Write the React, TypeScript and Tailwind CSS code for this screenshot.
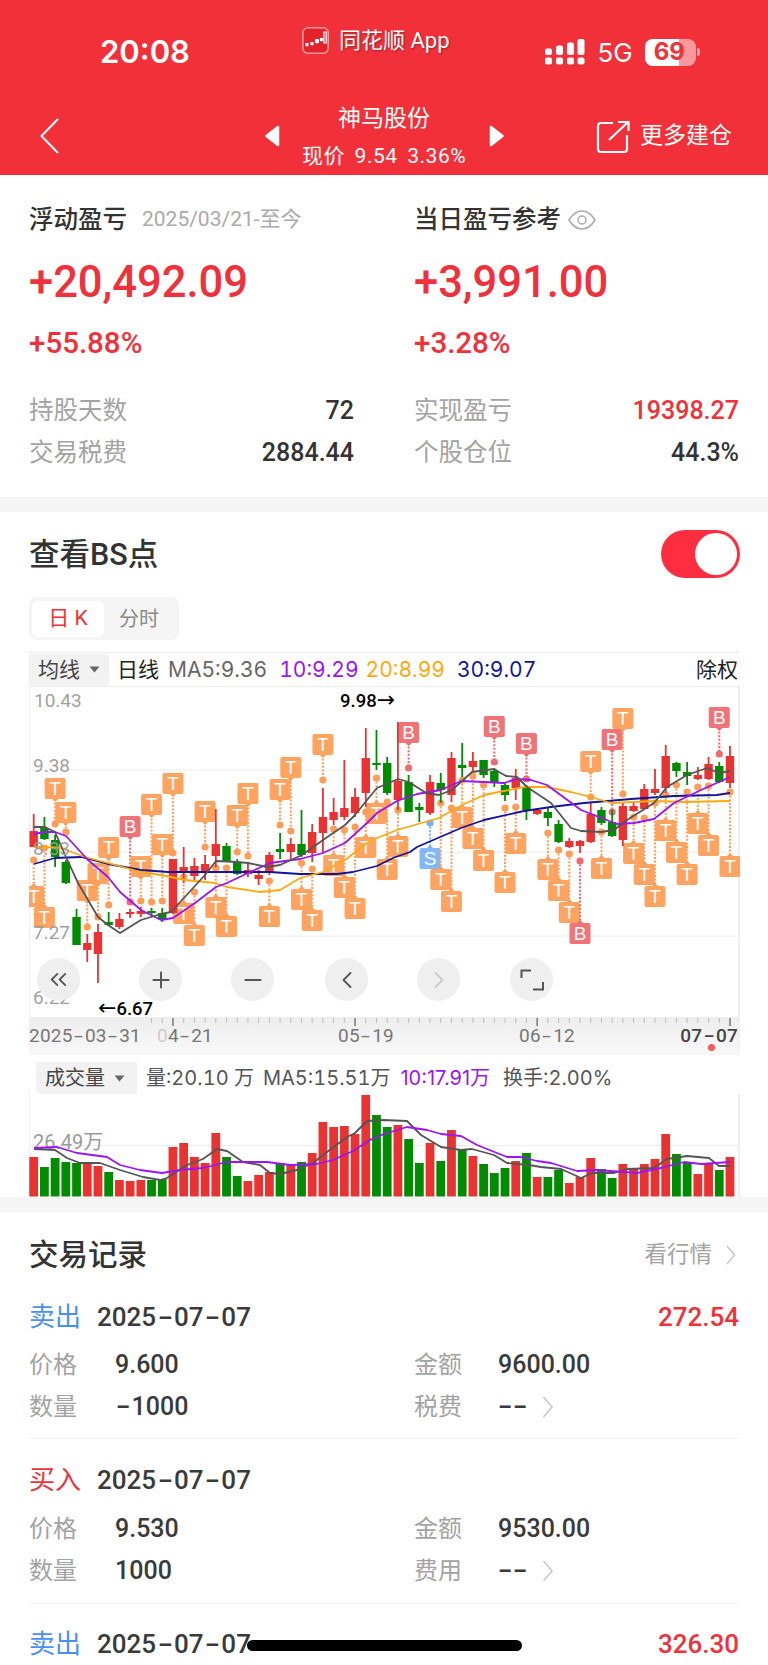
import React, { Fragment } from "react";
import { ChevronsLeft, ChevronLeft, ChevronRight, Plus, Minus } from "lucide-react";

const RED = "#e93232";
const GREEN = "#008c00";
const X = (i: number) => 33.7 + i * 10.712;

type C = [0 | 1, number, number, number, number];
const candles: C[] = [
  [0, 831, 847, 814, 847], [1, 828, 839, 817, 840], [1, 840, 857, 835, 867], [1, 862, 883, 860, 884],
  [1, 917, 945, 909, 945], [0, 943, 950, 934, 962], [0, 932, 954, 924, 983], [1, 922, 925, 912, 926],
  [0, 919, 927, 913, 929], [0, 912, 914, 909, 918], [0, 911, 914, 907, 917], [1, 911, 913, 908, 917],
  [1, 913, 919, 908, 922], [0, 859, 913, 859, 914], [0, 867, 871, 847, 883], [0, 866, 876, 858, 882],
  [0, 864, 872, 855, 880], [0, 844, 856, 809, 867], [1, 846, 862, 843, 862], [1, 862, 874, 859, 875],
  [0, 870, 874, 864, 877], [0, 875, 879, 870, 885], [0, 855, 873, 852, 875], [1, 849, 852, 833, 859],
  [0, 844, 852, 838, 859], [1, 844, 855, 810, 857], [0, 832, 853, 824, 862], [0, 817, 833, 788, 853],
  [0, 812, 820, 798, 825], [0, 808, 817, 760, 820], [0, 797, 813, 788, 817], [0, 758, 793, 728, 807],
  [1, 763, 765, 730, 770], [1, 763, 793, 757, 795], [0, 781, 800, 722, 810], [1, 782, 812, 775, 812],
  [1, 807, 810, 803, 822], [0, 782, 813, 775, 815], [1, 783, 790, 773, 803], [0, 758, 795, 752, 802],
  [1, 765, 768, 743, 777], [0, 761, 767, 752, 772], [1, 760, 775, 760, 778], [1, 771, 783, 768, 787],
  [1, 785, 795, 782, 801], [0, 778, 788, 769, 800], [1, 788, 810, 785, 820], [0, 810, 814, 808, 815],
  [1, 812, 818, 808, 826], [1, 824, 842, 820, 843], [0, 841, 847, 838, 848], [0, 841, 846, 840, 853],
  [0, 814, 842, 803, 843], [1, 810, 823, 807, 825], [1, 822, 836, 810, 837], [0, 806, 840, 803, 846],
  [0, 806, 811, 802, 812], [0, 789, 809, 784, 810], [0, 789, 793, 769, 795], [0, 756, 788, 745, 793],
  [1, 763, 771, 762, 777], [1, 772, 776, 762, 785], [0, 775, 779, 767, 780], [0, 764, 779, 757, 780],
  [1, 766, 782, 762, 783], [0, 756, 783, 746, 788],
];

type M = [number, "T" | "B" | "S", number, number];
const markers: M[] = [
  [0, "T", 886, 860], [1, "T", 907, 848], [2, "T", 778, 824], [3, "T", 802, 832], [5, "T", 880, 927],
  [6, "T", 863, 917], [7, "T", 837, 905], [9, "B", 816, 902], [10, "T", 856, 901], [11, "T", 794, 902],
  [12, "T", 834, 901], [13, "T", 773, 853], [14, "T", 903, 877], [15, "T", 925, 892], [16, "T", 801, 847],
  [17, "T", 897, 868], [18, "T", 916, 868], [19, "T", 805, 852], [20, "T", 783, 856], [22, "T", 906, 881],
  [23, "T", 779, 825], [24, "T", 757, 831], [25, "T", 889, 863], [26, "T", 910, 869], [27, "T", 734, 780],
  [28, "T", 855, 829], [29, "T", 877, 830], [30, "T", 898, 827], [31, "T", 837, 812], [32, "T", 803, 778],
  [33, "T", 859, 802], [34, "T", 836, 810], [35, "B", 722, 768], [37, "S", 848, 823], [38, "T", 869, 803],
  [39, "T", 891, 808], [40, "T", 807, 780], [41, "T", 828, 776], [42, "T", 850, 785], [43, "B", 716, 762],
  [44, "T", 872, 808], [45, "T", 833, 807], [46, "B", 733, 779], [48, "T", 859, 833], [49, "T", 880, 850],
  [50, "T", 902, 854], [51, "B", 923, 861], [52, "T", 751, 797], [53, "T", 858, 832], [54, "B", 729, 812],
  [55, "T", 708, 794], [56, "T", 843, 817], [57, "T", 864, 818], [58, "T", 886, 803], [59, "T", 820, 795],
  [60, "T", 842, 785], [61, "T", 864, 792], [62, "T", 813, 787], [63, "T", 835, 786], [64, "B", 707, 754],
  [65, "T", 856, 792],
];

const ma5 = "34,827 45,827 55,832 66,857 78,883 98,917 108,925 120,933 141,920 161,914 171,912 205,875 216,861 237,862 248,863 267,867 280,865 302,855 323,840 345,825 355,815 367,800 377,788 398,779 409,782 426,793 439,795 452,790 472,772 494,769 506,776 517,777 527,787 551,803 571,828 581,831 601,832 614,830 627,820 654,803 667,787 687,775 707,768 719,773 730,771";
const ma10 = "34,834 45,832 55,832 66,836 88,860 108,877 120,892 141,910 161,920 173,918 195,903 216,887 227,883 248,873 270,863 300,859 323,853 345,843 367,823 377,813 397,801 417,794 441,790 461,781 484,782 504,783 517,779 531,780 547,785 581,810 617,824 634,823 654,819 674,803 701,790 730,777";
const ma20 = "34,847 45,847 61,848 85,857 108,863 141,872 161,875 185,880 215,883 227,887 260,892 280,890 300,878 323,872 345,860 367,843 377,838 397,830 439,818 462,805 484,795 504,791 524,787 547,787 571,792 591,797 611,803 634,802 654,801 684,802 730,801";
const ma30 = "34,864 55,858 81,857 108,864 141,870 168,872 195,872 270,872 300,874 337,874 353,872 377,866 393,858 410,852 417,847 461,828 484,820 524,811 551,807 584,803 631,799 674,796 717,795 730,793";

const vols: [0 | 1, number][] = [
  [0, 1157], [1, 1167], [1, 1158], [1, 1162], [1, 1163], [0, 1164], [0, 1166], [1, 1172], [0, 1180], [0, 1181], [0, 1180],
  [1, 1180], [1, 1179], [0, 1147], [0, 1143], [0, 1157], [0, 1163], [0, 1133], [1, 1157], [1, 1176], [0, 1181], [0, 1175],
  [0, 1172], [1, 1163], [0, 1164], [1, 1162], [0, 1153], [0, 1122], [0, 1127], [0, 1126], [0, 1134], [0, 1095], [1, 1115],
  [1, 1127], [0, 1125], [1, 1139], [1, 1163], [0, 1143], [1, 1161], [0, 1130], [1, 1150], [0, 1156], [1, 1164], [1, 1173],
  [1, 1168], [0, 1161], [1, 1153], [0, 1177], [1, 1177], [1, 1170], [0, 1183], [0, 1177], [0, 1158], [1, 1169], [1, 1178],
  [0, 1164], [0, 1168], [0, 1164], [0, 1159], [0, 1134], [1, 1154], [1, 1162], [0, 1174], [0, 1163], [1, 1170], [0, 1157],
];
const vma5 = "34,1149 55,1150 67,1158 80,1163 100,1163 120,1170 143,1177 160,1180 167,1178 187,1165 203,1159 217,1149 227,1151 243,1162 260,1165 270,1173 280,1174 297,1170 313,1163 327,1152 347,1137 355,1133 367,1121 384,1120 407,1121 421,1135 441,1147 461,1150 472,1149 494,1155 507,1163 529,1165 541,1167 561,1169 581,1178 592,1173 614,1173 627,1169 654,1168 667,1159 687,1156 709,1158 719,1166 730,1166";
const vma10 = "34,1148 57,1147 77,1153 107,1157 120,1165 140,1170 162,1173 180,1170 203,1168 227,1162 267,1162 290,1165 317,1164 333,1160 353,1151 370,1140 384,1134 407,1127 427,1130 441,1134 461,1136 477,1145 507,1157 521,1157 537,1161 551,1163 577,1171 597,1170 637,1173 661,1168 684,1162 701,1164 730,1162";

const D = ({ t, m = "mx-[4.500px]" }: { t: string; m?: string }) => (
  <>
    {t.split("-").map((p, i) => (
      <Fragment key={i}>
        {i > 0 && <span className={`inline-block scale-x-[1.7] ${m}`}>-</span>}
        {p}
      </Fragment>
    ))}
  </>
);

function Flag({ m }: { m: M }) {
  const [i, kind, top, dot] = m;
  const x = X(i);
  const fill = kind === "T" ? "#ff9d57" : kind === "B" ? "#ef6a70" : "#78b2f6";
  const above = top < dot;
  return (
    <g>
      <line x1={x} x2={x} y1={above ? top + 21 : dot} y2={above ? dot : top} stroke={fill} strokeWidth={2} strokeDasharray="2 1.6" />
      <circle cx={x} cy={dot} r={3.6} fill={fill} />
      <rect x={x - 10.5} y={top} width={21} height={21} rx={2} fill={fill} fillOpacity={0.94} />
      {above ? (
        <path d={`M${x - 3} ${top + 21}L${x} ${top + 24}L${x + 3} ${top + 21}Z`} fill={fill} />
      ) : (
        <path d={`M${x - 3} ${top}L${x} ${top - 3}L${x + 3} ${top}Z`} fill={fill} />
      )}
      <text x={x} y={top + 17} textAnchor="middle" fontSize={19} fontFamily="Liberation Sans" fill="#fff">
        {kind}
      </text>
    </g>
  );
}

function PriceChart() {
  return (
    <svg viewBox="29 686 711 332" className="block w-[711px] h-[332px] overflow-visible font-['Roboto',sans-serif]">
      <defs>
        <clipPath id="plot">
          <rect x={29} y={686} width={711} height={332} />
        </clipPath>
      </defs>
      {[770, 852, 936].map((y) => (
        <line key={y} x1={29} x2={739} y1={y} y2={y} stroke="#ececec" strokeWidth={1} />
      ))}
      <path d="M29.5 1017.5V686.5H738.5V1017.5H29.5" fill="none" stroke="#eee" strokeWidth={1} />
      <line x1={739} x2={739} y1={686} y2={1018} stroke="#eee" strokeWidth={2} />
      <g clipPath="url(#plot)">
        {markers.map((m) => (
          <Flag key={m[0]} m={m} />
        ))}
      </g>
      {candles.map((c, i) => {
        const col = c[0] ? GREEN : RED;
        const x = X(i);
        return (
          <g key={i}>
            <line x1={x} x2={x} y1={c[3]} y2={c[4]} stroke={col} strokeWidth={1.8} />
            <rect x={x - 4.2} y={c[1]} width={8.4} height={Math.max(c[2] - c[1], 2)} fill={col} />
          </g>
        );
      })}
      <polyline points={ma30} fill="none" stroke="#14149a" strokeWidth={1.8} strokeLinejoin="round" />
      <polyline points={ma20} fill="none" stroke="#ffa90f" strokeWidth={1.8} strokeLinejoin="round" />
      <polyline points={ma10} fill="none" stroke="#9a14f5" strokeWidth={1.8} strokeLinejoin="round" />
      <polyline points={ma5} fill="none" stroke="#555" strokeWidth={1.8} strokeLinejoin="round" />
      <g fill="#9a9a9a" fontSize={19} fillOpacity={0.95}>
        <text x={34} y={707}>10.43</text>
        <text x={33} y={772}>9.38</text>
        <text x={33} y={855}>8.33</text>
        <text x={33} y={939}>7.27</text>
        <text x={33} y={1004}>6.22</text>
      </g>
      <g fill="#000" fontSize={18.5} fontWeight={500}>
        <text x={340} y={707}>9.98<tspan fontFamily="DejaVu Sans" fontWeight={400} fontSize={22}>→</tspan></text>
        <text x={98} y={1015}><tspan fontFamily="DejaVu Sans" fontWeight={400} fontSize={22}>←</tspan>6.67</text>
      </g>
    </svg>
  );
}

function VolumeChart() {
  return (
    <svg viewBox="29 1094 711 103" className="block w-[711px] h-[103px] font-['Roboto','Noto_Sans_CJK_SC',sans-serif]">
      <line x1={29} x2={739} y1={1145.5} y2={1145.5} stroke="#ececec" />
      <line x1={29.5} x2={29.5} y1={1094} y2={1197} stroke="#eee" />
      <line x1={739} x2={739} y1={1094} y2={1197} stroke="#eee" strokeWidth={2} />
      {vols.map((v, i) => (
        <rect key={i} x={X(i) - 4.4} y={v[1]} width={8.8} height={1196.5 - v[1]} fill={v[0] ? GREEN : RED} />
      ))}
      <text x={33} y={1149} fontSize={20} fill="#9a9a9a">26.49万</text>
      <polyline points={vma5} fill="none" stroke="#555" strokeWidth={1.8} strokeLinejoin="round" />
      <polyline points={vma10} fill="none" stroke="#9a14f5" strokeWidth={1.8} strokeLinejoin="round" />
    </svg>
  );
}

const Caret = () => (
  <svg width="11" height="7" viewBox="0 0 11 7" className="shrink-0">
    <path d="M0.5 0.5H10.5L5.5 6.5Z" fill="#666" />
  </svg>
);

const Thin = ({ cls = "" }: { cls?: string }) => (
  <svg width="12" height="24" viewBox="0 0 12 24" className={cls}>
    <path d="M1.5 2L10 12L1.5 22" fill="none" stroke="#c8c8c8" strokeWidth="1.6" />
  </svg>
);

function Stat({ label, value, red }: { label: string; value: string; red?: boolean }) {
  return (
    <div className="flex h-[42px] items-center justify-between">
      <span className="text-[24.5px] text-[#a3a3a3]">{label}</span>
      <span className={`text-[25px] font-medium ${red ? "text-[#f0303a]" : "text-[#333]"}`}>{value}</span>
    </div>
  );
}

function Detail({ l, v, l2, v2, arrow }: { l: string; v: string; l2: string; v2: string; arrow?: boolean }) {
  return (
    <div className="grid grid-cols-[385px_1fr] h-[42px] items-center pt-[3px]">
      <div className="flex items-center">
        <span className="w-[86px] text-[24px] text-[#a3a3a3]">{l}</span>
        <span className="text-[25px] font-medium text-[#3a3a3a]"><D t={v} m="mx-[4px]" /></span>
      </div>
      <div className="flex items-center">
        <span className="w-[84px] text-[24px] text-[#a3a3a3]">{l2}</span>
        <span className="text-[25px] font-medium text-[#3a3a3a]"><D t={v2} m="mx-[3px]" /></span>
        {arrow && <Thin cls="ml-[15px]" />}
      </div>
    </div>
  );
}

function TradeHead({ kind, color, amount }: { kind: string; color: string; amount: string }) {
  return (
    <div className="flex h-[36px] items-center">
      <span className={`w-[68px] text-[26px] ${color}`}>{kind}</span>
      <span className="text-[26px] font-medium text-[#3a3a3a]"><D t="2025-07-07" /></span>
      <span className="ml-auto text-[26px] font-medium text-[#f0303a]">{amount}</span>
    </div>
  );
}

export default function App() {
  return (
    <div className="relative w-[768px] h-[1665px] overflow-hidden bg-white font-['Roboto','Noto_Sans_CJK_SC',sans-serif]">
      {/* header */}
      <header className="h-[175px] bg-[#f2303a] text-white">
        <div className="flex h-[88px] items-center pt-[16px]">
          <span className="ml-[100px] w-[90px] text-[31px] font-semibold font-['Inter',sans-serif]">20:08</span>
          <div className="ml-[112px] mb-[23px] flex items-center">
            <svg width="27" height="27" viewBox="0 0 27 27">
              <rect x="0.8" y="0.8" width="25.4" height="25.4" rx="5" fill="#e4222b" stroke="#f79a9a" strokeWidth="1.6" />
              <path d="M5 17V20M10 15V19M15 12V17M19.500 10V15M23 5V16" stroke="#ffb5b5" strokeWidth="1" />
              <g fill="#fff">
                <rect x="3.500" y="16" width="3" height="3" />
                <rect x="8.500" y="15" width="3" height="3" />
                <rect x="13" y="12" width="4" height="4" />
                <rect x="18" y="11" width="3" height="3" />
                <rect x="21.800" y="5" width="2.500" height="11" fill="none" stroke="#fff" strokeWidth="1" />
              </g>
            </svg>
            <span className="ml-[10px] text-[22px] [text-shadow:1px_1px_2px_rgba(0,0,0,0.35)]">同花顺 App</span>
          </div>
          <svg width="40" height="27" viewBox="0 0 40 27" className="ml-[95px]">
            <g fill="#fff">
              <rect x="0" y="18.500" width="7" height="7" rx="2" /><rect x="0" y="9.500" width="7" height="6.500" rx="2" />
              <rect x="11" y="18.500" width="7" height="7" rx="2" /><rect x="11" y="6.500" width="7" height="9.500" rx="2" />
              <rect x="22" y="18.500" width="7" height="7" rx="2" /><rect x="22" y="3.500" width="7" height="12.500" rx="2" />
              <rect x="32.500" y="18.500" width="7" height="7" rx="2" /><rect x="32.500" y="0" width="7" height="16" rx="2" />
            </g>
          </svg>
          <span className="ml-[13px] text-[26px] font-['Inter',sans-serif]">5G</span>
          <div className="relative ml-[12px] flex h-[27px] w-[51px] items-center overflow-hidden rounded-[8px] bg-white/50">
            <div className="absolute inset-y-0 left-0 w-[34px] bg-white" />
            <span className="relative pl-[9px] text-[24px] font-bold leading-none text-[#f2303a] font-['Inter',sans-serif]">69</span>
          </div>
          <div className="ml-[1px] h-[8px] w-[3px] rounded-r bg-white/60" />
        </div>
        <div className="flex h-[87px] items-center pt-[9px]">
          <svg width="20" height="36" viewBox="0 0 20 36" className="ml-[40px]">
            <path d="M18 1L1.5 18L18 35" fill="none" stroke="#fff" strokeWidth="2" />
          </svg>
          <svg width="16" height="22" viewBox="0 0 16 22" className="ml-[204px]">
            <path d="M14 2L2.5 11L14 20Z" fill="#fff" stroke="#fff" strokeWidth="2.5" strokeLinejoin="round" />
          </svg>
          <div className="ml-[21px] mt-[5px] flex w-[166px] flex-col items-center">
            <span className="text-[23px] leading-[34px]">神马股份</span>
            <span className="text-[21px] leading-[40px] whitespace-nowrap tracking-[0.5px] [word-spacing:4px]">现价 9.54 3.36%</span>
          </div>
          <svg width="16" height="22" viewBox="0 0 16 22" className="ml-[22px]">
            <path d="M2 2L13.5 11L2 20Z" fill="#fff" stroke="#fff" strokeWidth="2.5" strokeLinejoin="round" />
          </svg>
          <svg width="34" height="33" viewBox="0 0 34 33" className="ml-[91px]">
            <path d="M17 3H5A3 3 0 0 0 2 6V29A3 3 0 0 0 5 32H28A3 3 0 0 0 31 29V15" fill="none" stroke="#fff" strokeWidth="2.2" />
            <path d="M13 20L32 2M22 2H32.5V11" fill="none" stroke="#fff" strokeWidth="2.2" />
          </svg>
          <span className="ml-[10px] text-[23px]">更多建仓</span>
        </div>
      </header>

      {/* summary */}
      <section className="px-[29px] pt-[31px] pb-[23px]">
        <div className="grid grid-cols-[325px_325px] gap-x-[60px]">
          <div>
            <div className="flex h-[28px] items-center">
              <span className="text-[24.5px] font-medium text-[#333]">浮动盈亏</span>
              <span className="ml-[15px] text-[21px] text-[#aaa]">2025/03/21-至今</span>
            </div>
            <div className="mt-[24px] h-[50px] text-[43.5px] leading-[50px] font-medium text-[#f0303a]">+20,492.09</div>
            <div className="mt-[18px] h-[34px] text-[29.5px] leading-[34px] font-medium text-[#f0303a]">+55.88%</div>
          </div>
          <div>
            <div className="flex h-[28px] items-center">
              <span className="text-[24.5px] font-medium text-[#333]">当日盈亏参考</span>
              <svg width="28" height="20" viewBox="0 0 28 20" className="ml-[7px]">
                <path d="M1 10C5 3.5 9 1 14 1C19 1 23 3.5 27 10C23 16.500 19 19 14 19C9 19 5 16.500 1 10Z" fill="none" stroke="#aaa" strokeWidth="1.5" />
                <circle cx="14" cy="10" r="4" fill="none" stroke="#aaa" strokeWidth="1.5" />
              </svg>
            </div>
            <div className="mt-[24px] h-[50px] text-[43.5px] leading-[50px] font-medium text-[#f0303a]">+3,991.00</div>
            <div className="mt-[18px] h-[34px] text-[29.5px] leading-[34px] font-medium text-[#f0303a]">+3.28%</div>
          </div>
        </div>
        <div className="mt-[30px] grid grid-cols-[325px_325px] gap-x-[60px]">
          <Stat label="持股天数" value="72" />
          <Stat label="实现盈亏" value="19398.27" red />
          <Stat label="交易税费" value="2884.44" />
          <Stat label="个股仓位" value="44.3%" />
        </div>
      </section>
      <div className="h-[15px] bg-[#f5f5f5]" />

      {/* BS chart */}
      <section>
        <div className="flex h-[48px] mt-[18px] items-center justify-between pl-[29px] pr-[28px]">
          <span className="pt-[2px] text-[30.500px] font-medium text-[#333] leading-none">查看BS点</span>
          <div className="flex h-[48px] w-[79px] items-center justify-end rounded-full bg-[#ff2d3f] pr-[3px]">
            <div className="h-[42px] w-[42px] rounded-full bg-white" />
          </div>
        </div>
        <div className="ml-[29px] mt-[19px] flex h-[43px] w-[150px] items-center rounded-[8px] bg-[#f5f5f5] pl-[3px]">
          <div className="flex h-[36px] w-[72px] items-center justify-center rounded-[6px] bg-white text-[21px] text-[#f0303a]">日 K</div>
          <div className="ml-[15px] text-[20px] text-[#888]">分时</div>
        </div>
        <div className="mx-[29px] mt-[12px] w-[711px] font-['Inter','Noto_Sans_CJK_SC',sans-serif] tabular-nums">
          <div className="flex h-[34px] items-center border-t border-[#eee] text-[21px] whitespace-nowrap">
            <div className="flex h-[32px] w-[80px] items-center rounded-[3px] bg-[#f2f2f2] pl-[9px] text-[#444]">
              均线<span className="ml-[9px]"><Caret /></span>
            </div>
            <span className="ml-[8px] text-[#222]">日线</span>
            <span className="ml-[9px] text-[#666]">MA5:9.36</span>
            <span className="ml-[12px] text-[#9a14f5]">10:9.29</span>
            <span className="ml-[7px] text-[#ffa90f]">20:8.99</span>
            <span className="ml-[12px] text-[#14149a]">30:9.07</span>
            <span className="ml-auto pr-[2px] text-[#222]">除权</span>
          </div>
          <div className="relative h-[332px]">
            <PriceChart />
            <div className="absolute left-[8px] top-[272px] flex">
              <div className="flex h-[43px] w-[43px] items-center justify-center rounded-full bg-[#eee]/95 text-[#555]"><ChevronsLeft size={27} strokeWidth={1.6} /></div>
              <div className="ml-[59px] flex h-[43px] w-[43px] items-center justify-center rounded-full bg-[#eee]/95 text-[#555]"><Plus size={26} strokeWidth={1.8} /></div>
              <div className="ml-[49px] flex h-[43px] w-[43px] items-center justify-center rounded-full bg-[#eee]/95 text-[#555]"><Minus size={26} strokeWidth={1.8} /></div>
              <div className="ml-[51px] flex h-[43px] w-[43px] items-center justify-center rounded-full bg-[#eee]/95 text-[#555]"><ChevronLeft size={28} strokeWidth={1.6} /></div>
              <div className="ml-[49px] flex h-[43px] w-[43px] items-center justify-center rounded-full bg-[#eee]/95 text-[#ccc]"><ChevronRight size={28} strokeWidth={1.6} /></div>
              <div className="ml-[50px] flex h-[43px] w-[43px] items-center justify-center rounded-full bg-[#eee]/95">
                <svg width="24" height="22" viewBox="0 0 24 22">
                  <path d="M1.500 9V1.500H11M23 13V20.500H13" fill="none" stroke="#555" strokeWidth="2" />
                </svg>
              </div>
            </div>
          </div>
          {/* axis */}
          <div className="relative h-[37px] bg-gradient-to-b from-[#eeeeee] to-[#f8f8f8] text-[19px] text-[#777] whitespace-nowrap font-['Roboto',sans-serif] tracking-[0.2px]">
            <svg viewBox="29 1018 711 12" className="block h-[12px] w-[711px]">
              {Array.from({ length: 55 }, (_, k) => {
                const x = X(11 + k);
                const big = k === 2 || k === 19 || k === 36 || k === 54;
                return <line key={k} x1={x} x2={x} y1={1018} y2={big ? 1026 : 1023} stroke={big ? "#777" : "#bbb"} strokeWidth={big ? 1.5 : 1} />;
              })}
            </svg>
            <span className="absolute left-0 top-[4px]"><D t="2025-03-31" m="mx-[3.500px]" /></span>
            <span className="absolute left-[128px] top-[4px]"><span className="text-[#ccc]">0</span><D t="4-21" m="mx-[3.500px]" /></span>
            <span className="absolute left-[309px] top-[4px]"><D t="05-19" m="mx-[3.500px]" /></span>
            <span className="absolute left-[490px] top-[4px]"><D t="06-12" m="mx-[3.500px]" /></span>
            <span className="absolute right-[2px] top-[4px] font-medium text-[#444]"><D t="07-07" m="mx-[3.500px]" /></span>
            <span className="absolute left-[679px] top-[26px] h-[7px] w-[7px] rounded-full bg-[#f4585c]" />
          </div>
          {/* volume */}
          <div className="h-[142px] pt-[7px]">
            <div className="flex h-[32px] items-center pl-[7px] text-[20px] whitespace-nowrap text-[#555]">
              <div className="flex h-[32px] w-[101px] items-center rounded-[3px] bg-[#f2f2f2] pl-[9px] text-[#444]">
                成交量<span className="ml-[9px]"><Caret /></span>
              </div>
              <span className="ml-[9px]">量:20.10 万</span>
              <span className="ml-[9px]">MA5:15.51万</span>
              <span className="ml-[10px] normal-nums text-[#9a14f5]">10:17.91万</span>
              <span className="ml-[13px]">换手:2.00%</span>
            </div>
            <VolumeChart />
          </div>
        </div>
      </section>
      <div className="h-[15px] bg-[#f5f5f5]" />

      {/* trades */}
      <section className="px-[29px] pt-[25px]">
        <div className="flex h-[36px] items-center">
          <span className="text-[29.5px] text-[#333] font-medium">交易记录</span>
          <span className="ml-auto text-[22.5px] text-[#a3a3a3]">看行情</span>
          <Thin cls="ml-[13px] mr-[2px] scale-90" />
        </div>
        <div className="mt-[26px]">
          <TradeHead kind="卖出" color="text-[#4a90f0]" amount="272.54" />
          <div className="mt-[7px]">
            <Detail l="价格" v="9.600" l2="金额" v2="9600.00" />
            <Detail l="数量" v="-1000" l2="税费" v2="--" arrow />
          </div>
        </div>
        <div className="mt-[12px] h-px bg-[#f2f2f2]" />
        <div className="mt-[23px]">
          <TradeHead kind="买入" color="text-[#f0303a]" amount="" />
          <div className="mt-[8px]">
            <Detail l="价格" v="9.530" l2="金额" v2="9530.00" />
            <Detail l="数量" v="1000" l2="费用" v2="--" arrow />
          </div>
        </div>
        <div className="mt-[13px] h-px bg-[#f2f2f2]" />
        <div className="mt-[22px]">
          <TradeHead kind="卖出" color="text-[#4a90f0]" amount="326.30" />
        </div>
      </section>

      <div className="absolute bottom-[14px] left-[247px] h-[11px] w-[275px] rounded-full bg-black" />
    </div>
  );
}
